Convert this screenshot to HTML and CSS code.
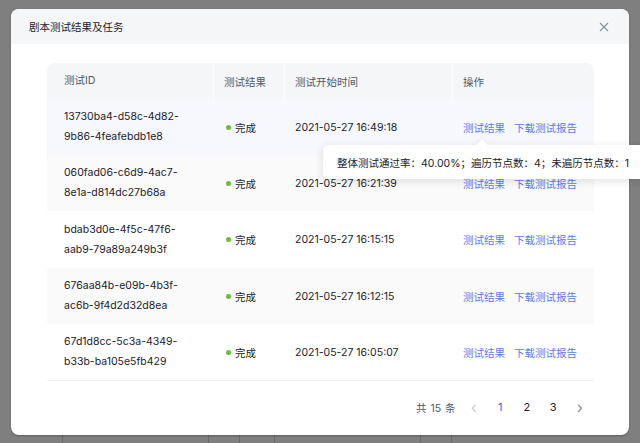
FILE: index.html
```html
<!DOCTYPE html>
<html lang="zh">
<head>
<meta charset="utf-8">
<link rel="stylesheet" href="styles.css">
</head>
<body>
<div class="screen">
  <div class="modal">
    <div class="modal-header">
      <span class="modal-title">剧本测试结果及任务</span>
      <svg class="close" width="10" height="10" viewBox="0 0 10 10"><path d="M1 1L9 9M9 1L1 9" stroke="#86909c" stroke-width="1.1" fill="none"/></svg>
    </div>
    <div class="modal-body">
      <div class="table">
        <div class="row head">
          <div class="cell c1">测试ID</div>
          <div class="cell c2">测试结果</div>
          <div class="cell c3">测试开始时间</div>
          <div class="cell c4">操作</div>
        </div>
        <div class="row hover">
          <div class="cell c1">13730ba4-d58c-4d82-<br>9b86-4feafebdb1e8</div>
          <div class="cell c2"><span class="dot"></span>完成</div>
          <div class="cell c3">2021-05-27 16:49:18</div>
          <div class="cell c4"><span class="link">测试结果</span><span class="link">下载测试报告</span></div>
          <div class="tooltip">整体测试通过率：40.00%；遍历节点数：4；未遍历节点数：1</div>
        </div>
        <div class="row stripe">
          <div class="cell c1">060fad06-c6d9-4ac7-<br>8e1a-d814dc27b68a</div>
          <div class="cell c2"><span class="dot"></span>完成</div>
          <div class="cell c3">2021-05-27 16:21:39</div>
          <div class="cell c4"><span class="link">测试结果</span><span class="link">下载测试报告</span></div>
        </div>
        <div class="row tall">
          <div class="cell c1">bdab3d0e-4f5c-47f6-<br>aab9-79a89a249b3f</div>
          <div class="cell c2"><span class="dot"></span>完成</div>
          <div class="cell c3">2021-05-27 16:15:15</div>
          <div class="cell c4"><span class="link">测试结果</span><span class="link">下载测试报告</span></div>
        </div>
        <div class="row stripe">
          <div class="cell c1">676aa84b-e09b-4b3f-<br>ac6b-9f4d2d32d8ea</div>
          <div class="cell c2"><span class="dot"></span>完成</div>
          <div class="cell c3">2021-05-27 16:12:15</div>
          <div class="cell c4"><span class="link">测试结果</span><span class="link">下载测试报告</span></div>
        </div>
        <div class="row last">
          <div class="cell c1">67d1d8cc-5c3a-4349-<br>b33b-ba105e5fb429</div>
          <div class="cell c2"><span class="dot"></span>完成</div>
          <div class="cell c3">2021-05-27 16:05:07</div>
          <div class="cell c4"><span class="link">测试结果</span><span class="link">下载测试报告</span></div>
        </div>
      </div>
      <div class="pager">
        <span class="total">共 15 条</span>
        <span class="pg arrow dim">&lsaquo;</span>
        <span class="pg active">1</span>
        <span class="pg">2</span>
        <span class="pg">3</span>
        <span class="pg arrow">&rsaquo;</span>
      </div>
    </div>
  </div>
  <div class="under">
    <span class="u" style="width:63px"></span>
    <span class="u" style="width:146px"></span>
    <span class="u" style="width:31px"></span>
    <span class="u" style="width:35px"></span>
    <span class="u" style="width:146px"></span>
    <span class="u" style="width:31px"></span>
  </div>
</div>
</body>
</html>
```

FILE: styles.css
```css
* { box-sizing: border-box; }
html, body { margin: 0; padding: 0; }
body {
  width: 640px;
  height: 443px;
  overflow: hidden;
  background: #7f7f7f;
  font-family: "Inter", "Noto Sans CJK SC", sans-serif;
  font-size: 10.5px;
  color: #1d2129;
}
.screen { padding-top: 9px; }
.modal {
  position: relative;
  margin-left: 11px;
  width: 618px;
  height: 426px;
  background: #fff;
  border-radius: 8px;
  box-shadow: 0 1px 2px rgba(0,0,0,0.25);
}
.modal-header {
  height: 35px;
  background: #f5f6f8;
  border-radius: 8px 8px 0 0;
  display: flex;
  align-items: center;
  justify-content: space-between;
  padding: 0 20px 0 18px;
}
.modal-title { font-size: 10.5px; color: #1d2129; }
.close { display: block; }
.modal-body { padding: 19px 35px 0 36px; }
.table { width: 547px; }
.row {
  position: relative;
  display: flex;
  height: 56px;
  align-items: center;
}
.row.tall { height: 57px; }
.row.head {
  height: 36px;
  background: #f5f6f8;
  border-radius: 8px 8px 0 0;
  color: #4e5969;
}
.row.head .cell { height: 36px; display: flex; align-items: center; }
.row.head .c1, .row.head .c2, .row.head .c3 { border-right: 1px solid #fdfdfe; }
.row.hover { background: #f6f8fe; }
.row.stripe { background: #fafafa; }
.row.last { border-bottom: 1px solid #f0f0f0; height: 57px; }
.cell { padding-left: 10px; }
.c1 { width: 167px; padding-left: 17px; line-height: 20px; }
.c2 { width: 71px; display: flex; align-items: center; }
.c3 { width: 168px; }
.c4 { width: 141px; }
.dot {
  width: 5px; height: 5px; border-radius: 50%;
  background: #6cbb3c; margin: 0 4px 0 2px;
}
.link { color: #5a79f5; margin-right: 9px; }
.tooltip {
  position: absolute;
  left: 276px;
  top: 46px;
  width: 330px;
  height: 34px;
  padding-left: 14px;
  display: flex;
  align-items: center;
  background: #fff;
  border-radius: 6px;
  box-shadow: 0 2px 10px rgba(0,0,0,0.12);
  color: #1d2129;
  white-space: nowrap;
  z-index: 2;
}
.tooltip::before {
  content: "";
  position: absolute;
  left: 155px;
  top: -4px;
  width: 8px; height: 8px;
  background: #fff;
  transform: rotate(45deg);
  box-shadow: -2px -2px 4px rgba(0,0,0,0.04);
}
.pager {
  display: flex;
  justify-content: flex-end;
  align-items: center;
  height: 52px;
  padding-top: 0;
  margin-right: 1px;
}
.total { color: #4e5969; margin-right: 5px; word-spacing: 1px; }
.pg { width: 26.5px; text-align: center; color: #1d2129; font-size: 11px; }
.pg.active { color: #3a5cf5; }
.pg.arrow { color: #86909c; font-size: 16px; line-height: 16px; }
.pg.dim { color: #c9cdd4; }
.under { display: flex; height: 8px; }
.u { display: block; height: 8px; border-right: 1px solid #6a6a6a; }
```
